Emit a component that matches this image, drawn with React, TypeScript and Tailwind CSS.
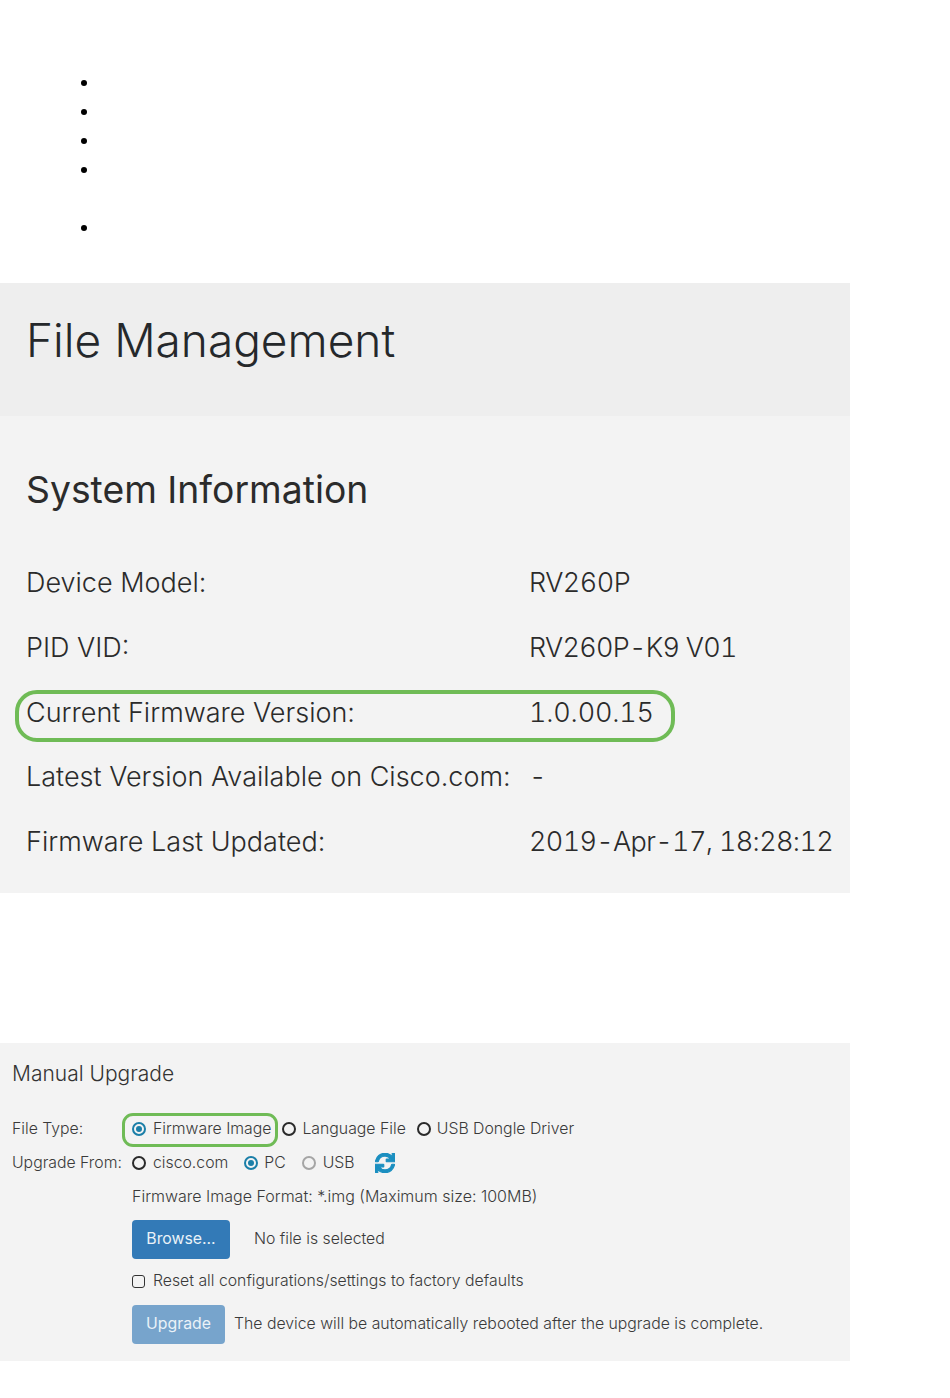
import { FaSync } from "react-icons/fa";

const sans = "font-['Inter','Open_Sans',sans-serif]";

function InfoRow({ label, value, ring, spread }: { label: string; value: string; ring?: boolean; spread?: string }) {
  return (
    <div className="relative flex h-[64.75px] items-center text-[27px] text-[#2b2b2b]">
      <div className="w-[503px] shrink-0 font-light">{label}</div>
      <div className={`font-light whitespace-nowrap tabular-nums ${spread ?? ""}`}>{value}</div>
      {ring && (
        <div className="absolute left-[-11px] top-[9px] h-[52px] w-[660px] rounded-[22px] border-[4px] border-[#6fbb56]" />
      )}
    </div>
  );
}

function Radio({ on, off, tight, label }: { on?: boolean; off?: boolean; tight?: boolean; label: string }) {
  const ringColor = on ? "border-[#1b7fa8]" : off ? "border-[#a5a5a5]" : "border-[#2a2a2a]";
  return (
    <span className={`flex items-center ${tight ? "gap-[6px]" : "gap-[7px]"}`}>
      <span className={`flex h-[14px] w-[14px] items-center justify-center rounded-full border-2 ${ringColor}`}>
        {on && <span className="h-[6px] w-[6px] rounded-full bg-[#1b7fa8]" />}
      </span>
      <span>{label}</span>
    </span>
  );
}

export default function App() {
  return (
    <div className={`${sans} h-[1398px] w-[950px] bg-white`}>
      <ul className="h-[283px] list-disc pl-[100px] pt-[68px] text-[19px] marker:text-black">
        <li className="h-[29px] leading-[29px]">&nbsp;</li>
        <li className="h-[29px] leading-[29px]">&nbsp;</li>
        <li className="h-[29px] leading-[29px]">&nbsp;</li>
        <li className="h-[58px] leading-[29px]">&nbsp;</li>
        <li className="h-[29px] leading-[29px]">&nbsp;</li>
      </ul>

      <div className="w-[850px] bg-[#eeeeee] px-[26px] h-[133px] pt-[26px]">
        <h1 className="text-[46px] leading-[62px] font-light text-[#25282b]">File Management</h1>
      </div>

      <div className="h-[477px] w-[850px] bg-[#f3f3f3] px-[26px] pt-[47px]">
        <h2 className="text-[37.3px] leading-[54px] font-normal text-[#2b2b2b]">System Information</h2>
        <div className="mt-[34px]">
          <InfoRow label="Device Model:" value="RV260P" spread="tracking-[-0.5px]" />
          <InfoRow label="PID VID:" value="RV260P-K9 V01" spread="tracking-[-0.7px]" />
          <InfoRow label="Current Firmware Version:" value="1.0.00.15" ring spread="tracking-[-0.2px]" />
          <InfoRow label="Latest Version Available on Cisco.com:" value="-" />
          <InfoRow label="Firmware Last Updated:" value="2019-Apr-17, 18:28:12" spread="tracking-[-0.65px]" />
        </div>
      </div>

      <div className="mt-[150px] h-[318px] w-[850px] bg-[#f3f3f3] px-[12px] pt-[18px] text-[15.8px] font-light text-[#3a3a3a]">
        <div className="text-[21px] leading-[26px] text-[#333333]">Manual Upgrade</div>

        <div className="mt-[27px] flex h-[30px] items-center">
          <div className="w-[120px]">File Type:</div>
          <div className="relative flex items-center gap-[11px]">
            <Radio on label="Firmware Image" />
            <Radio tight label="Language File" />
            <Radio tight label="USB Dongle Driver" />
            <div className="absolute left-[-10px] top-[-4px] h-[34px] w-[156px] rounded-[11px] border-[3px] border-[#6fbb56]" />
          </div>
        </div>

        <div className="mt-[4px] flex h-[30px] items-center">
          <div className="w-[120px]">Upgrade From:</div>
          <div className="flex items-center gap-[16px]">
            <Radio label="cisco.com" />
            <Radio tight label="PC" on />
            <Radio off label="USB" />
            <FaSync className="ml-[4px] h-[20px] w-[20px] text-[#1b8fc0]" stroke="currentColor" strokeWidth={30} />
          </div>
        </div>

        <div className="ml-[120px]">
          <div className="mt-[4px] flex h-[30px] items-center pb-[2px] text-[16px]">Firmware Image Format: *.img (Maximum size: 100MB)</div>
          <div className="mt-[8px] flex items-center gap-[24px]">
            <div className="flex h-[39px] w-[98px] items-center justify-center rounded-[4px] bg-[#337ab7] pb-[2px] font-normal text-[#eaf2f8]">Browse...</div>
            <span className="pb-[2px]">No file is selected</span>
          </div>
          <div className="mt-[7px] flex h-[30px] items-center gap-[8px]">
            <span className="h-[13px] w-[13px] rounded-[3px] border-[1.5px] border-[#333333]" />
            <span>Reset all configurations/settings to factory defaults</span>
          </div>
          <div className="mt-[9px] flex items-center gap-[9px]">
            <div className="flex h-[39px] w-[93px] items-center justify-center rounded-[4px] bg-[#77a4cc] pb-[2px] font-normal text-[#eaf2f8]">Upgrade</div>
            <span className="pb-[2px]">The device will be automatically rebooted after the upgrade is complete.</span>
          </div>
        </div>
      </div>
    </div>
  );
}
